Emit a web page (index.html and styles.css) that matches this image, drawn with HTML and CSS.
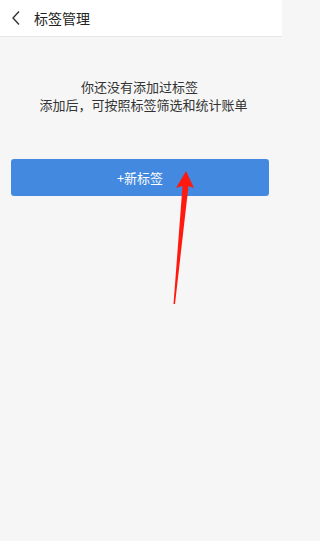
FILE: index.html
```html
<!DOCTYPE html>
<html lang="zh">
<head>
<meta charset="utf-8">
<link rel="stylesheet" href="styles.css">
</head>
<body>
<div class="page">
  <header class="topbar">
    <svg class="back" width="10" height="16" viewBox="0 0 10 16"><path d="M8 1.5 L2 8 L8 14.5" fill="none" stroke="#333" stroke-width="1.4"/></svg>
    <span class="title">标签管理</span>
  </header>
  <main class="content">
    <div class="empty">
      <span class="line l1">你还没有添加过标签</span>
      <span class="line l2">添加后，可按照标签筛选和统计账单</span>
    </div>
    <button class="add">+新标签</button>
  </main>
  <svg class="arrow" width="282" height="541" viewBox="0 0 282 541">
    <polygon points="186,171 194,188 188.5,186 175,304 173.5,304 182.5,186 176,188" fill="#ff1a10"/>
  </svg>
</div>
</body>
</html>
```
FILE: styles.css
```css
html, body { margin: 0; padding: 0; }
body {
  font-family: "Noto Sans CJK SC", "Noto Sans", sans-serif;
  background: #f6f6f6;
}
.page {
  position: relative;
  width: 282px;
  height: 541px;
  background: #f6f6f6;
  overflow: hidden;
}
.topbar {
  height: 37px;
  background: #fff;
  border-bottom: 1px solid #e6e6e6;
  display: flex;
  align-items: center;
  padding-left: 11px;
  box-sizing: border-box;
}
.back { margin-right: 13px; }
.title {
  font-size: 14px;
  color: #222;
}
.content {
  padding: 41px 11px 0 11px;
  display: flex;
  flex-direction: column;
}
.empty {
  display: flex;
  flex-direction: column;
  align-items: center;
  font-size: 13px;
  color: #333;
}
.line {
  display: block;
  height: 18px;
  line-height: 18px;
  white-space: nowrap;
}
.l1 { margin-right: 3px; }
.l2 { margin-left: 5px; }
.add {
  margin-top: 45px;
  width: 258px;
  height: 37px;
  border: none;
  border-radius: 3px;
  background: #4389e0;
  color: #fff;
  font-family: "Noto Sans CJK SC", sans-serif;
  font-size: 13px;
  padding: 0;
}
.arrow {
  position: absolute;
  left: 0;
  top: 0;
  pointer-events: none;
}
```
